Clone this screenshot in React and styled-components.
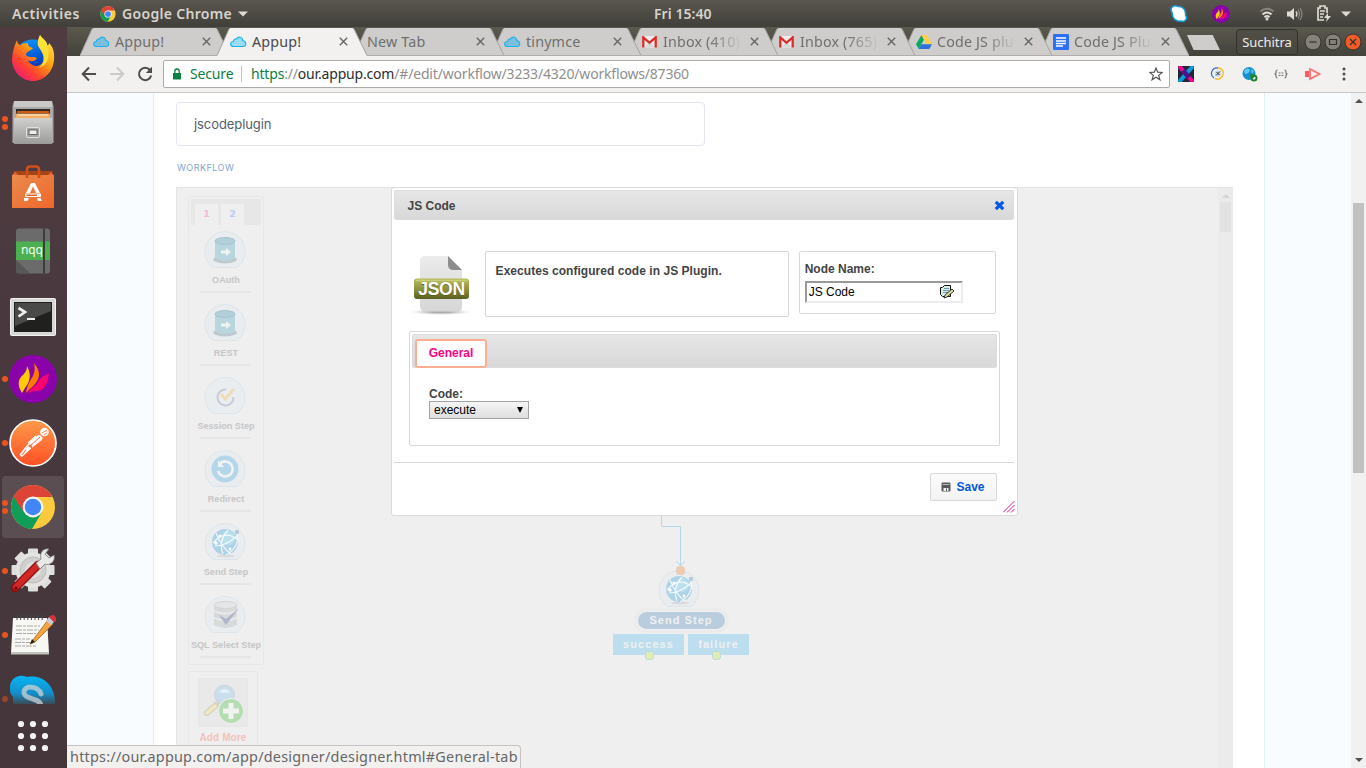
import React from "react";
import styled, { createGlobalStyle } from "styled-components";

const Global = createGlobalStyle`
  * { box-sizing: border-box; }
  body { margin: 0; overflow: hidden; background: #f8fcff; }
  svg { display: block; flex: none; }
`;

const ui = `"Noto Sans", "Open Sans", sans-serif`;
const arial = `"Liberation Sans", Arial, sans-serif`;

/* ---------- desktop shell ---------- */
const Desktop = styled.div`
  width: 1366px; height: 768px; display: flex; flex-direction: column; overflow: hidden; font-family: ${ui};
`;
const TopBar = styled.header`
  height: 27px; flex: none; display: flex; align-items: center; padding: 0 15px 0 12px;
  background: linear-gradient(#5a574f, #403f3a); color: #d8d4cb;
  font: 600 14px/27px ${ui};
`;
const BarText = styled.span`
  white-space: nowrap; width: ${(p) => p.$w}px; margin-right: ${(p) => p.$gap || 0}px; letter-spacing: ${(p) => p.$ls || 0}px;
`;
const Clock = styled(BarText)`margin-left: 406px;`;
const Tray = styled.div`margin-left: auto; display: flex; align-items: center; height: 27px;`;
const TrayGap = styled.span`width: ${(p) => p.$w}px;`;
const Columns = styled.div`flex: 1; display: flex; min-height: 0;`;

const Dock = styled.nav`
  width: 67px; flex: none; display: flex; flex-direction: column; background: linear-gradient(#4f3b40, #46383d 60%, #44363b);
`;
const Slot = styled.div`
  position: relative; height: ${(p) => p.$h || 64}px; flex: none; overflow: hidden; display: flex; align-items: flex-start; justify-content: center;
  & > svg { margin-right: 1px; }
`;
const ActivePlate = styled.span`
  position: absolute; left: 2px; top: 1px; width: 62px; height: 62px; border-radius: 4px; background: #5b4e52;
  & ~ * { z-index: 1; }
`;
const Dots = styled.span`
  position: absolute; left: 2px; top: ${(p) => (p.$n === 2 ? 25 : 29)}px; display: flex; flex-direction: column; gap: 2px; opacity: ${(p) => (p.$dim ? 0.5 : 1)};
  i { width: 6px; height: 6px; border-radius: 50%; background: #e95420; }
`;

/* ---------- browser window ---------- */
const Browser = styled.main`flex: 1; display: flex; flex-direction: column; min-width: 0; background: #f8fcff; position: relative;`;
const TabStrip = styled.div`
  height: 29px; flex: none; display: flex; padding-left: 13px; background: linear-gradient(#5b594e, #43423b);
`;
const TabBox = styled.div`
  position: relative; width: 150px; height: 29px; margin-right: -13px; z-index: ${(p) => p.$z}; flex: none;
`;
const TabShape = styled.svg`position: absolute; left: 0; top: 0;`;
const TabInner = styled.div`
  position: relative; height: 29px; display: flex; align-items: center; padding: 0 19px 0 13px;
`;
const Favicon = styled.span`width: 17px; margin-right: 5px; display: flex; justify-content: center;`;
const TabTitle = styled.span`
  flex: 1; white-space: nowrap; font: 14.3px/28px ${ui}; letter-spacing: 0.16px;
  color: ${(p) => (p.$active ? "#4a4a4a" : "#6f6f6f")}; margin-right: 9px;
  ${(p) => p.$fade && "mask-image: linear-gradient(90deg, #000 60%, transparent 102%);"}
`;
const NewTab = styled.span`
  width: 33px; height: 15px; margin: 8px 0 0 11px; background: #cecdcc; clip-path: polygon(0 0, 78% 0, 100% 100%, 20% 100%);
`;
const WindowControls = styled.div`margin-left: auto; display: flex; align-items: center; gap: 2px; padding: 1px 4px 0 0; height: 29px;`;
const UserButton = styled.button`
  height: 26px; width: 62px; padding: 0; margin-right: 4px; border: 1px solid #32312c; border-radius: 4px;
  background: linear-gradient(#504e46, #484740); color: #eeeeec; font: 13px/22px ${ui}; letter-spacing: -0.05px;
`;
const Toolbar = styled.div`
  height: 37px; flex: none; display: flex; align-items: center; background: #f2f1f0; border-bottom: 1px solid #c9c8c7; padding: 0 15px 0 14px;
`;
const NavIcon = styled.span`width: 28px; display: flex;`;
const Omnibox = styled.div`
  width: 1007px; height: 28px; margin-left: -2px; border: 1px solid #ababab; border-radius: 2px; background: #fff; display: flex; align-items: center;
  padding: 0 6px 0 8px; font: 14px/26px ${ui}; white-space: nowrap;
`;
const Secure = styled.span`color: #0b8043; margin-left: 8px; width: 51px; letter-spacing: -0.15px;`;
const UrlText = styled.span`
  border-left: 1px solid #c3c3c3; height: 16px; line-height: 15px; padding-left: 9px; color: #8f8f8f; flex: 1; letter-spacing: ${(p) => p.$ls}px;
  b { font-weight: 400; color: #0b8043; } em { font-style: normal; color: #2d2d2d; }
`;
const Extensions = styled.div`display: flex; align-items: center; gap: 16px; margin-left: 8px; & > :last-child { margin-left: 4px; }`;

/* ---------- page ---------- */
const Viewport = styled.div`flex: 1; min-height: 0; display: flex;`;
const Page = styled.section`
  flex: 1; min-width: 0; margin: 0 86px; background: #fff; border: solid #dfeefa; border-width: 0 1px; padding: 9px 31px 0 22px; overflow: hidden;
  display: flex; flex-direction: column;
`;
const NameField = styled.div`
  width: 529px; height: 44px; flex: none; border: 1px solid #e2e5f3; border-radius: 4px; padding-left: 17px;
  font: 13px/42px Inter, sans-serif; color: #54606c; letter-spacing: -0.08px;
`;
const Caption = styled.div`
  height: 41px; flex: none; font: 9px/43px Inter, sans-serif; color: #86a5cb; letter-spacing: 0.48px; padding-left: 1px;
`;
const Canvas = styled.div`
  position: relative; flex: 1; min-height: 0; background: #efefef; border: solid #e4e4e4; border-width: 1px 0 0 1px; display: flex; justify-content: space-between;
`;
const Scroll = styled.div`
  width: 15px; flex: none; background: ${(p) => (p.$pale ? "#ebebeb" : "#f1f1f1")}; display: flex; flex-direction: column; align-items: center;
`;
const Thumb = styled.span`
  width: 11px; height: ${(p) => p.$h}px; flex: none; margin-top: ${(p) => p.$top}px; background: ${(p) => (p.$pale ? "#e2e2e2" : "#c1c1c1")};
`;
const Arrow = styled.span`
  width: 0; height: 0; border: 4px solid transparent; ${(p) => (p.$down ? "border-top" : "border-bottom")}: 4px solid ${(p) => p.$c || "#505050"};
  margin: ${(p) => (p.$down ? "auto 0 2px" : "2px 0 0")};
`;
const Sidebar = styled.div`padding: 8px 0 0 11px; width: 90px; display: flex; flex-direction: column; align-items: flex-start; gap: 6px; overflow: hidden;`;
const Palette = styled.div`width: 76px; height: 469px; flex: none; border: 1px solid #e6e8e9; border-radius: 2px; padding: 2px;`;
const PaletteTabs = styled.div`height: 26px; background: #e7e7e7; border-radius: 2px; padding: 5px 0 0 4px; display: flex; gap: 3px;`;
const PaletteTab = styled.span`
  width: 23px; background: #efefef; text-align: center; font: bold 9.5px/19px "DejaVu Sans", sans-serif; color: ${(p) => p.$c};
`;
const PaletteItem = styled.div`
  height: 73px; display: flex; flex-direction: column; align-items: center; padding: 6px 0 0; font: bold 9.1px/11px ${arial}; color: #c6c6c6; white-space: nowrap;
  svg { margin-bottom: 6px; margin-right: 2px; }
  &::after { content: ""; width: 51px; height: 2px; flex: none; background: #e6e6e6; margin: 5px 1px 0 0; }
`;
const AddMore = styled.div`
  width: 70px; height: 110px; flex: none; border: 1px solid #e6e8e9; border-radius: 2px; padding-top: 6px; display: flex; flex-direction: column; align-items: center;
  font: bold 10px/14px ${arial}; color: #f3c2ba; letter-spacing: 0.1px;
`;
const AddPlate = styled.div`width: 50px; height: 49px; background: #e9e9e9; border: 1px solid #e6e6e6; border-radius: 2px; margin-bottom: 4px;`;

/* workflow graph: free canvas placement */
const Link = styled.svg`position: absolute; left: 480px; top: 326px;`;
const GraphNode = styled.div`
  position: absolute; left: 436px; top: 382px; width: 140px; display: flex; flex-direction: column; align-items: center;
  & > svg { margin: 0 9px 1px 0; }
`;
const NodeTitle = styled.div`
  width: 93px; height: 23px; margin-left: -4px; border: 2px solid #ebebeb; outline: 1px solid #ebebeb; border-radius: 12px; padding: 1px; background: #f1f1f1;
  span { display: block; height: 17px; border-radius: 9px; background: #b9cddf; color: #f0f0f0; text-align: center; font: bold 11px/16px ${arial}; letter-spacing: 1.05px; }
`;
const Ports = styled.div`display: flex; gap: 4px; margin: 2px 4px 0 0;`;
const Port = styled.div`
  position: relative; width: ${(p) => p.$w}px; height: 21px; background: #bcdeef; color: #f0f0f0; text-align: center; font: bold 11px/20px ${arial}; letter-spacing: ${(p) => p.$ls}px;
`;
const Knob = styled.i`
  position: absolute; width: 9px; height: 9px; border-radius: 3px; background: ${(p) => p.$c}; border: 1px solid ${(p) => p.$b}; left: ${(p) => p.$x}px; top: ${(p) => p.$y}px;
`;

/* ---------- dialog ---------- */
const Dialog = styled.div`
  position: absolute; left: 214px; top: -1px; width: 627px; height: 329px; background: #fff; border: 1px solid #dadada; border-radius: 3px; padding: 2px;
  display: flex; flex-direction: column; font: bold 12px/15px ${arial}; color: #444;
`;
const DialogHead = styled.div`
  height: 30px; width: 620px; flex: none; border-radius: 2px; background: linear-gradient(#e6e6e6, #d8d8d8); border: 1px solid #dcdcdc;
  display: flex; align-items: center; justify-content: space-between; padding: 2px 8px 0 12.5px;
  svg { margin-bottom: 1px; }
`;
const Intro = styled.div`display: flex; align-items: flex-start; padding: 31px 0 0 18px; height: 111px; flex: none;`;
const DescBox = styled.div`width: 304px; height: 66px; border: 1px solid #d8d8d8; border-radius: 2px; margin-left: 13px; padding: 12px 9.6px; letter-spacing: 0.04px;`;
const NameBox = styled.div`width: 197px; height: 63px; border: 1px solid #d8d8d8; border-radius: 2px; margin-left: 10px; padding: 10px 4.7px;`;
const InsetField = styled.div`
  width: 158px; height: 22px; margin-top: 4px; border: 2px solid; border-color: #999 #ececec #ececec #999; padding: 0 6px 0 2px;
  display: flex; align-items: center; justify-content: space-between; font-weight: 400; color: #000;
`;
const TabPanel = styled.div`width: 591px; height: 115px; flex: none; margin-left: 15px; border: 1px solid #d8d8d8; border-radius: 2px; padding: 2px;`;
const TabHead = styled.div`height: 34px; background: linear-gradient(#e6e6e6, #d8d8d8); border: 1px solid #dcdcdc; border-radius: 2px; padding: 4px 0 0 2px;`;
const GeneralTab = styled.div`
  width: 72px; height: 29px; border: 2px solid #fcae92; border-radius: 3px; background: #fff; color: #ff0084; text-align: center; line-height: 24px;
`;
const FormRow = styled.div`padding: 19px 0 0 17px; line-height: 14px;`;
const Select = styled.div`
  width: 100px; height: 18px; border: 1px solid #a3a3a3; background: linear-gradient(#f5f5f5, #dedede); display: flex; align-items: center; justify-content: space-between;
  padding: 0 5px 0 4px; font-weight: 400; color: #000; line-height: 16px;
  &::after { content: ""; border: 3.5px solid transparent; border-top: 6px solid #000; border-bottom: 0; }
`;
const DialogFoot = styled.div`margin-top: 16px; width: 620px; border-top: 1px solid #d8d8d8; display: flex; justify-content: flex-end; padding: 10px 17px 0 0;`;
const SaveButton = styled.button`
  width: 67px; height: 28px; border: 1px solid #d8d8d8; border-radius: 2px; background: linear-gradient(#fbfbfb, #f3f3f3); color: #0059e0; padding: 0 1px 0 0;
  display: flex; align-items: center; justify-content: center; gap: 5px; font: bold 12px/15px ${arial};
`;
const Grip = styled.svg`position: absolute; right: 2px; bottom: 2px;`;
const StatusBar = styled.div`
  position: absolute; left: 0; bottom: 0; width: 454px; height: 23px; background: #f2f1f0; border: solid #c4c3c2; border-width: 1px 1px 0 0; border-top-right-radius: 4px;
  padding-left: 3px; font: 14.4px/22px ${ui}; color: #666; white-space: nowrap; letter-spacing: ${(p) => p.$ls}px; z-index: 20;
`;

/* ---------- drawings ---------- */
const Chrome = ({ s = 46 }) => (
  <svg width={s} height={s} viewBox="0 0 46 46">
    <circle cx="23" cy="23" r="22" fill="#fbcb3d" />
    <path d="M23 23 4 12A22 22 0 0 0 22 45L32 28Z" fill="#109d57" />
    <path d="M3.5 12.5A22 22 0 0 1 42.5 13H23L13.5 28Z" fill="#dc4437" />
    <circle cx="23" cy="23" r="10.4" fill="#f4f4f4" />
    <circle cx="23" cy="23" r="8.2" fill="#4285f4" />
  </svg>
);
const Flame = ({ s }) => (
  <svg width={s} height={s} viewBox="0 0 48 48">
    <circle cx="24" cy="24" r="24" fill="#8a02aa" />
    <path d="M13 38C8 30 9 24 14 20C17 17 18 14 18 11C22 18 22 26 16 33Z" fill="#ffcb05" />
    <path d="M17 38C18 30 21 26 24 21C26 17 26 12 25 8C31 15 32 22 26 29C23 33 20 34 17 38Z" fill="#ff7b00" />
    <path d="M19 39C21 33 26 32 29 27C32 22 36 20 40 19C38 29 36 36 27 36C24 36 21 37 19 39Z" fill="#fb0371" />
  </svg>
);
const Caret = () => <svg width="10" height="6" viewBox="0 0 10 6"><path d="M0 .5H10L5 5.5Z" fill="#dfdbd2" /></svg>;

const Firefox = () => (
  <svg width="44" height="64" viewBox="0 0 44 64">
    <defs>
      <linearGradient id="ffA" x1="0.9" y1="0" x2="0.1" y2="1"><stop offset="0" stopColor="#fff14a" /><stop offset=".4" stopColor="#ffa30f" /><stop offset=".7" stopColor="#ff4130" /><stop offset="1" stopColor="#e5128a" /></linearGradient>
      <linearGradient id="ffB" x1="0.3" y1="0" x2="0.5" y2="1"><stop offset="0" stopColor="#0a93ff" /><stop offset=".6" stopColor="#0048c4" /><stop offset="1" stopColor="#3a1a78" /></linearGradient>
    </defs>
    <circle cx="22" cy="32" r="19.500" fill="url(#ffB)" />
    <path d="M6 13C6 16 8 18 10 18C12 15 15 17 17 16C17 19 18 20 22 21C20 24 15 24 15 28C17 31 22 29 26 31C24 35 20 35 17 33C19 39 28 42 32 35C34 29 30 23 27 19C26 14 28 11 29 8C31 12 36 13 36 18C38 19 38 16 38 16C41 19 44 24 43 33C42 45 33 54 22 54C11 54 2 45 1 34C1 26 3 19 6 13Z" fill="url(#ffA)" />
    <path d="M29 8C31 12 37 14 37 22C39 33 35 39 28 41C35 34 34 28 29 22C26 17 27 12 29 8Z" fill="#ffe53a" opacity=".85" />
  </svg>
);
const Files = () => (
  <svg width="44" height="64" viewBox="0 0 44 64">
    <defs><linearGradient id="fl" x1="0" y1="0" x2="0" y2="1"><stop offset="0" stopColor="#d0d0ce" /><stop offset="1" stopColor="#9b9b99" /></linearGradient></defs>
    <path d="M3 10H41L42.500 15V52H1.500V15Z" fill="#aaa" /><path d="M3 10H41V16H3Z" fill="#c9c9c7" />
    <path d="M5 18H39V28H5Z" fill="#302b28" /><path d="M6 20H38V22H6Z" fill="#cf5912" /><path d="M5 22.500H39V28H5Z" fill="#f5ad62" /><path d="M7 23.500H37V24.500H7Z" fill="#fff2dd" />
    <path d="M3 27H41V53H3Z" fill="url(#fl)" />
    <rect x="15.500" y="36.500" width="13" height="10" rx="1.500" fill="#a5a5a3" stroke="#e0e0de" /><rect x="18" y="39" width="8" height="4.500" fill="#eee" stroke="#4d4d4d" strokeWidth=".8" />
  </svg>
);
const Software = () => (
  <svg width="44" height="64" viewBox="0 0 44 64">
    <defs><linearGradient id="sw" x1="0" y1="0" x2="1" y2="1"><stop offset="0" stopColor="#e98a4c" /><stop offset="1" stopColor="#f0672c" /></linearGradient></defs>
    <path d="M3 16H41L43 21H1Z" fill="#a64416" /><path d="M1 21 4 17 8 21ZM43 21 40 17 36 21Z" fill="#e56a34" />
    <path d="M1 20H43V53H1Z" fill="url(#sw)" />
    <path d="M16 23V15Q16 11.500 19 11.500H25Q28 11.500 28 15V23" fill="none" stroke="#d24e1c" strokeWidth="2.600" />
    <path d="M15 38 20 28H24L29 38H25L22 31.500 19 38ZM14 38.500H30V42H14ZM13 43H18L16.500 46H13ZM26 43H29.500L31 46H27Z" fill="#fff" />
    <path d="M15.500 39.500H26V41H15.500Z" fill="#e76228" />
  </svg>
);
const NqqLabel = styled.span`position: absolute; left: 21px; top: 24px; font: 12px/14px ${ui}; color: #f0fff0; letter-spacing: -0.2px;`;
const Nqq = () => (
  <>
    <svg width="44" height="64" viewBox="0 0 44 64">
      <rect x="5" y="9.500" width="34" height="45" rx="3" fill="#6b6b6b" /><path d="M5 41 19 54.500H8Q5 54 5 52Z" fill="#575757" />
      <path d="M5 22.500H39V41H5Z" fill="#4caf50" /><path d="M32 9.500H34V54.500H32Z" fill="#3b3f3b" />
    </svg>
    <NqqLabel>nqq</NqqLabel>
  </>
);
const Terminal = () => (
  <svg width="46" height="64" viewBox="0 0 46 64">
    <rect x="0.500" y="15.500" width="45" height="37" rx="1" fill="#d7d7d5" stroke="#f1f1f1" /><rect x="4" y="19" width="38" height="30" fill="#20211f" />
    <path d="M5 20H41V28L5 43Z" fill="#4a4b49" /><path d="M8.500 25 15 29 8.500 33.500" fill="none" stroke="#eee" strokeWidth="2.700" /><path d="M17 36H25" stroke="#eee" strokeWidth="2" />
  </svg>
);
const Centered = styled.span`display: flex; align-items: center; height: 64px; margin-right: 1px;`;
const Postman = () => (
  <svg width="48" height="48" viewBox="0 0 48 48">
    <defs><linearGradient id="pm" x1="0" y1="0" x2="0" y2="1"><stop offset="0" stopColor="#ff9a4a" /><stop offset="1" stopColor="#ff4f25" /></linearGradient></defs>
    <circle cx="24" cy="24" r="23" fill="url(#pm)" stroke="#fff" strokeWidth="1.700" />
    <circle cx="35.500" cy="13" r="4.300" fill="#fff" /><path d="M33 14 38 11M35 16 38 14" stroke="#ff7d41" />
    <path d="M31 16 34 19 24 27 20 25ZM19 27 22 29 13 38 11 37Z" fill="#fff" /><path d="M30 16 18 27 11 36M33 20 23 28M27 17 19 24M22 29 17 33" fill="none" stroke="#fff" strokeWidth="1.300" />
    <path d="M31 18 20 28M17 31 13 36" stroke="#ff6838" strokeWidth="1" />
  </svg>
);
const Settings = () => (
  <svg width="46" height="64" viewBox="0 0 46 64">
    <g transform="translate(23 31)">
      {[0, 45, 90, 135].map((a) => <rect key={a} x="-5" y="-21.500" width="10" height="43" rx="1" fill="#dededc" transform={`rotate(${a})`} />)}
      <circle r="17.500" fill="#e3e3e1" /><circle r="13" fill="#cfcfcd" stroke="#bcbcba" /><circle r="8" fill="#dededc" />
    </g>
    <path d="M5 49 28 26" stroke="#8e1111" strokeWidth="8.500" strokeLinecap="round" /><path d="M6 48 28 26" stroke="#d32626" strokeWidth="6" strokeLinecap="round" />
    <circle cx="6" cy="49" r="1.600" fill="#611" />
    <path d="M26 24 31 20C29 13 34 9 39 10L35 15 39 19 44 16C46 23 39 27 35 25L30 30Z" fill="#e9e9e7" stroke="#777" strokeWidth=".8" />
  </svg>
);
const Notes = () => (
  <svg width="46" height="64" viewBox="0 0 46 64">
    <path d="M3 15H37L39 50H1Z" fill="#f7f7f4" /><path d="M1 49H39V51.500H1Z" fill="#c2c2bd" />
    {[0, 1, 2, 3, 4, 5, 6, 7].map((i) => <path key={i} d={`M${7 + i * 3.6} 17V12.500Q${8.4 + i * 3.6} 10 ${9 + i * 3.6} 14`} stroke="#444" fill="none" />)}
    <path d="M6 23H30M6 27H29M6 30.500H26M5 36H20M5 39.500H20M5 43H27" stroke="#aaa" strokeDasharray="6 1 3 1" />
    <path d="M20 41 38 17 43 21 25 39Z" fill="#f5a542" stroke="#a45c12" strokeWidth=".8" /><path d="M20 41 22 36 25 39Z" fill="#222" />
    <path d="M36 18 39 14 44 19 41 22Z" fill="#c9cbd3" /><path d="M39 14Q43 10 45.500 14T44 19Z" fill="#d7343a" />
  </svg>
);
const Skype = () => (
  <svg width="46" height="64" viewBox="0 0 46 64">
    <defs><linearGradient id="sk" x1="0" y1="9" x2="0" y2="38" gradientUnits="userSpaceOnUse"><stop offset="0" stopColor="#07b5f3" /><stop offset=".6" stopColor="#148ec8" /><stop offset="1" stopColor="#3f434b" /></linearGradient></defs>
    <path d="M0 20C0 12 8 6 17 10C32 7 45 18 45 35V40H3V30C0 27 0 24 0 20Z" fill="url(#sk)" />
    <path d="M31 27C28 18 13 18 14 26C15 33 29 30 31 38" fill="none" stroke="#cbd1d5" strokeWidth="5" strokeLinecap="round" opacity=".75" />
  </svg>
);
const AppGrid = () => (
  <svg width="46" height="64" viewBox="0 0 46 64">
    {[11, 23, 35].map((x) => [20, 32, 44].map((y) => <circle key={`${x}${y}`} cx={x} cy={y} r="3.1" fill="#f4f2f2" />))}
  </svg>
);
const Cloud = ({ dim }) => (
  <svg width="17" height="12" viewBox="0 0 17 12"><path d="M4 10.500C-.5 10.500-.2 5.800 3.300 5.500C3.600 2.800 5.800 2.800 6.500 3C8 .2 12.500.5 12.800 4.500C16.500 5 17 10.500 13 10.500Z" fill={dim ? "#7cbedd" : "#9bdcf8"} stroke="#1fb1ec" strokeWidth="1.100" /></svg>
);
const Gmail = () => (
  <svg width="15" height="12" viewBox="0 0 15 12"><path d="M1 0H14V11.500H1Z" fill="#ececec" /><path d="M3 11 7.500 6 12 11Z" fill="#d6d6d6" /><path d="M1.300 11.500V1.300L7.500 6.800 13.700 1.300V11.500" fill="none" stroke="#dd2c2c" strokeWidth="2.300" /></svg>
);
const Drive = () => (
  <svg width="16" height="14" viewBox="0 0 16 14"><path d="M5.400 0 0 9.300 2.700 14 8 4.600Z" fill="#0da960" /><path d="M5.400 0H10.600L16 9.300H10.700Z" fill="#ffcf43" /><path d="M5.400 9.300H16L13.300 14H2.700Z" fill="#2c6fdd" /></svg>
);
const Docs = () => (
  <svg width="16" height="16" viewBox="0 0 16 16"><rect width="16" height="16" rx="1" fill="#2f6ff5" /><path d="M3 4H13M3 7H13M3 9.500H13M3 12H10" stroke="#fff" strokeWidth="1.500" /></svg>
);
const CloseX = () => <svg width="9" height="9" viewBox="0 0 9 9"><path d="M.8.8 8.200 8.200M8.200.8.8 8.200" stroke="#666" strokeWidth="1.400" /></svg>;

const Plate = ({ children }) => (
  <svg width="42" height="38" viewBox="0 0 42 38"><path d="M9 36.500A20 20 0 1 1 33 36.500Z" fill="#eaedef" stroke="#dde5ea" />{children}</svg>
);
const Barrel = () => (
  <Plate><path d="M9.500 27Q21 24 32.500 27V30Q21 35 9.500 30Z" fill="#bfcace" /><path d="M11 9V27Q21 33 31 27V9Z" fill="#b9d6df" /><ellipse cx="21" cy="10" rx="10" ry="3.500" fill="#b2d0da" stroke="#a9c5cf" /><path d="M17 19.500H22V17L27 21 22 25V22.500H17Z" fill="#eef3f4" /></Plate>
);
const Check = () => (
  <Plate><path d="M22 12.500A8 8 0 1 0 29.500 20" fill="none" stroke="#c8cad8" strokeWidth="2" /><path d="M17 17 21 22 30 12" fill="none" stroke="#efdcb4" strokeWidth="2.800" /></Plate>
);
const Redo = () => (
  <Plate><circle cx="21" cy="19" r="13.500" fill="#b5d6e8" /><path d="M16 13.500A7.500 7.500 0 1 1 14 21" fill="none" stroke="#eff3f5" strokeWidth="2.600" /><path d="M14 10V17H20Z" fill="#eff3f5" /></Plate>
);
const Globe = () => (
  <Plate>
    <ellipse cx="22" cy="33" rx="9" ry="1.500" fill="#d9dadb" /><circle cx="21" cy="19" r="13" fill="#aed2e7" /><circle cx="24" cy="15" r="7" fill="#b9e0ed" />
    <path d="M9 20Q21 6 34 17M12 10Q18 25 27 31M11 23Q22 23 33 13M24 7Q14 18 19 31M33 10Q36 24 22 32" fill="none" stroke="#f3f8fa" strokeWidth="1.200" />
    <circle cx="33" cy="9" r="2.200" fill="#b3cadd" /><circle cx="12" cy="20" r="1.700" fill="#fff" /><circle cx="16" cy="13" r="1.500" fill="#fff" /><circle cx="26" cy="26" r="1.400" fill="#fff" />
  </Plate>
);
const Database = () => (
  <Plate><path d="M10 9V29Q21 35 33 29V9Z" fill="#d8d9da" /><path d="M10 15Q21 20 33 15M10 22Q21 27 33 22" fill="none" stroke="#ececec" strokeWidth="1.500" /><ellipse cx="21.500" cy="9" rx="11.500" ry="3.500" fill="#e6e6e6" stroke="#d3d4d5" /><path d="M15 19 22 29 35 12 22 23Z" fill="#adb5ca" /></Plate>
);
const Magnifier = () => (
  <svg width="48" height="47" viewBox="0 0 48 47"><path d="M8 34 17 26" stroke="#d5d2c2" strokeWidth="6" strokeLinecap="round" /><path d="M8 34 16 27" stroke="#f0e8c1" strokeWidth="3.500" strokeLinecap="round" /><circle cx="25.500" cy="16" r="9.500" fill="#c9dfee" stroke="#d1d9df" strokeWidth="2" /><path d="M20 13Q25 7 31 13Q25 15 20 13Z" fill="#e6f1f7" /><circle cx="32" cy="32" r="12.500" fill="#b5dcb3" stroke="#eef2ed" /><path d="M29.500 24H34.500V29.500H40V34.500H34.500V40H29.500V34.500H24V29.500H29.500Z" fill="#f1f3f1" /></svg>
);

const JsonWrap = styled.div`position: relative; width: 60px; height: 66px;`;
const JsonWord = styled.span`
  position: absolute; left: 0; top: 27px; width: 59px; text-align: center; color: #fff; font: bold 17.5px/22px ${arial}; letter-spacing: -0.3px; text-shadow: 0 1px 1px #5c5f1c;
`;
const JsonIcon = () => (
  <JsonWrap>
    <svg width="60" height="66" viewBox="0 0 60 66">
      <defs>
        <linearGradient id="pg" x1="0" y1="0" x2="0" y2="1"><stop offset="0" stopColor="#ebebeb" /><stop offset="1" stopColor="#d6d6d6" /></linearGradient>
        <linearGradient id="bd" x1="0" y1="0" x2="0" y2="1"><stop offset="0" stopColor="#b9bf5c" /><stop offset=".5" stopColor="#8e9440" /><stop offset="1" stopColor="#5c5f22" /></linearGradient>
        <radialGradient id="sh"><stop offset=".3" stopColor="#888" stopOpacity=".7" /><stop offset="1" stopColor="#bbb" stopOpacity="0" /></radialGradient>
      </defs>
      <ellipse cx="29" cy="61" rx="30" ry="3" fill="url(#sh)" />
      <path d="M8 10Q8 5 13 5H36L50 19V56Q50 60.500 45 60.500H13Q8 60 8 55Z" fill="url(#pg)" /><path d="M36 5 50 19H40Q36 18 36 14Z" fill="#8d8d8d" />
      <rect x="2" y="27.500" width="55" height="20.500" rx="3" fill="url(#bd)" /><path d="M4 29.500H55" stroke="#c9ce7a" strokeWidth="1.500" />
    </svg>
    <JsonWord>JSON</JsonWord>
  </JsonWrap>
);

const tabs = [
  { icon: <Cloud dim />, title: "Appup!" },
  { icon: <Cloud />, title: "Appup!", active: true },
  { title: "New Tab" },
  { icon: <Cloud dim />, title: "tinymce" },
  { icon: <Gmail />, title: "Inbox (410)", fade: true },
  { icon: <Gmail />, title: "Inbox (765)", fade: true },
  { icon: <Drive />, title: "Code JS plu", fade: true },
  { icon: <Docs />, title: "Code JS Plu", fade: true },
];
const steps = [["OAuth", Barrel], ["REST", Barrel], ["Session Step", Check], ["Redirect", Redo], ["Send Step", Globe], ["SQL Select Step", Database]];

function Tab({ icon, title, active, fade, z }) {
  return (
    <TabBox $z={z}>
      <TabShape width="150" height="29" viewBox="0 0 150 29">
        <path d="M0 29 12 2Q12.500 1 14 1H135Q136.500 1 137 2L150 29Z" fill={active ? "#f2f1f0" : "#cecdcc"} />
        <path d="M0 28.500 12 2M137 2 150 28.500" stroke="#a5a4a1" fill="none" />
        {!active && <path d="M0 28.500H150" stroke="#b0afad" />}
      </TabShape>
      <TabInner>
        {icon && <Favicon>{icon}</Favicon>}
        <TabTitle $active={active} $fade={fade}>{title}</TabTitle>
        <CloseX />
      </TabInner>
    </TabBox>
  );
}

export default function App() {
  return (
    <Desktop>
      <Global />
      <TopBar>
        <BarText $w={68} $gap={20} $ls={0.55}>Activities</BarText>
        <Chrome s={16} />
        <TrayGap $w={6} />
        <BarText $w={110} $gap={6} $ls={0.32}>Google Chrome</BarText>
        <Caret />
        <Clock $w={60} $ls={0.05}>Fri 15:40</Clock>
        <Tray>
          <svg width="18" height="18" viewBox="0 0 18 18"><path d="M1 5C1 1 5 0 8 1.500C13 1 16 5 15.500 10C18 14 15 17.500 11 16C6 17 2 13 2.500 9Z" fill="#fff" stroke="#149bd0" strokeWidth="1.500" /></svg>
          <TrayGap $w={24} /><Flame s={18} /><TrayGap $w={29} />
          <svg width="16" height="14" viewBox="0 0 16 14" fill="none" strokeWidth="2"><path d="M1.500 4.500Q8-1 14.500 4.500" stroke="#85837c" /><path d="M3.500 7.500Q8 3.500 12.500 7.500M5.500 10.200Q8 8 10.500 10.200" stroke="#dfdbd2" /><circle cx="8" cy="12" r="1.500" fill="#dfdbd2" /></svg>
          <TrayGap $w={11} />
          <svg width="17" height="14" viewBox="0 0 17 14" fill="none"><path d="M1 4.500H4L8 1V13L4 9.500H1Z" fill="#dfdbd2" /><path d="M10 4.500Q12 7 10 9.500" stroke="#dfdbd2" strokeWidth="1.300" /><path d="M12 2.500Q15 7 12 11.500M14 1Q18 7 14 13" stroke="#8d8a83" strokeWidth="1.200" /></svg>
          <TrayGap $w={13} />
          <svg width="15" height="17" viewBox="0 0 15 17" fill="none"><path d="M8 15H2V3H4V1H9V3H11V8M4 6H9M4 9H8M4 12H7" stroke="#dfdbd2" strokeWidth="1.700" /><path d="M12 8 8 13H11L10 17 15 11H12Z" fill="#dfdbd2" /></svg>
          <TrayGap $w={10} /><Caret />
        </Tray>
      </TopBar>
      <Columns>
        <Dock>
          <Slot><Firefox /></Slot>
          <Slot><Dots $n={2}><i /><i /></Dots><Files /></Slot>
          <Slot><Software /></Slot>
          <Slot><Nqq /></Slot>
          <Slot><Terminal /></Slot>
          <Slot><Dots><i /></Dots><Centered><Flame s={48} /></Centered></Slot>
          <Slot><Dots><i /></Dots><Centered><Postman /></Centered></Slot>
          <Slot><ActivePlate /><Dots $n={2}><i /><i /></Dots><Centered><Chrome s={46} /></Centered></Slot>
          <Slot><Dots><i /></Dots><Settings /></Slot>
          <Slot><Dots><i /></Dots><Notes /></Slot>
          <Slot $h={37}><Dots $dim><i /></Dots><Skype /></Slot>
          <Slot><AppGrid /></Slot>
        </Dock>
        <Browser>
          <TabStrip>
            {tabs.map((t, i) => <Tab key={i} {...t} z={t.active ? 10 : 9 - i} />)}
            <NewTab />
            <WindowControls>
              <UserButton>Suchitra</UserButton>
              {["M5.500 9H12.500", "M5.500 6.500H12.500V11.500H5.500Z", "M6 6 12 12M12 6 6 12"].map((d, i) => (
                <svg key={i} width="18" height="18" viewBox="0 0 18 18"><circle cx="9" cy="9" r="8" fill={i === 2 ? "#f25a26" : "#83817a"} stroke="#35342f" /><path d={d} fill="none" stroke="#35302b" strokeWidth="1.200" /></svg>
              ))}
            </WindowControls>
          </TabStrip>
          <Toolbar>
            <NavIcon><svg width="16" height="16" viewBox="0 0 16 16"><path d="M15 8H2M8 1.500 1.700 8 8 14.500" fill="none" stroke="#4d4d4d" strokeWidth="2" /></svg></NavIcon>
            <NavIcon><svg width="16" height="16" viewBox="0 0 16 16"><path d="M1 8H14M8 1.500 14.300 8 8 14.500" fill="none" stroke="#cccbca" strokeWidth="2" /></svg></NavIcon>
            <NavIcon><svg width="16" height="16" viewBox="0 0 16 16"><path d="M13 4A6.200 6.200 0 1 0 14.200 9.500" fill="none" stroke="#4d4d4d" strokeWidth="2" /><path d="M15 .8V7H8.800Z" fill="#4d4d4d" /></svg></NavIcon>
            <Omnibox>
              <svg width="10" height="12" viewBox="0 0 10 12"><path d="M1 5H9V11.500H1Z" fill="#0b8043" /><path d="M2.800 5V3.200A2.200 2.200 0 0 1 7.200 3.200V5" fill="none" stroke="#0b8043" strokeWidth="1.300" /></svg>
              <Secure>Secure</Secure>
              <UrlText $ls={-0.18}><b>https</b>://<em>our.appup.com</em>/#/edit/workflow/3233/4320/workflows/87360</UrlText>
              <svg width="14" height="14" viewBox="0 0 14 14"><path d="M7 1 8.700 5.200 13.200 5.500 9.700 8.400 10.900 12.800 7 10.300 3.100 12.800 4.300 8.400.8 5.500 5.300 5.200Z" fill="none" stroke="#555" strokeWidth="1.200" /></svg>
            </Omnibox>
            <Extensions>
              <svg width="16" height="16" viewBox="0 0 16 16"><path d="M0 0H16V16H0Z" fill="#202637" /><path d="M15 0 1 16" stroke="#109bd8" strokeWidth="4" /><path d="M1 0 15 16" stroke="#ee0890" strokeWidth="4" /><path d="M5 4.500 11 11.500" stroke="#46168a" strokeWidth="4.500" /></svg>
              <svg width="16" height="16" viewBox="0 0 16 16" fill="none"><path d="M13 8A5.500 5.500 0 0 1 5 12.500" stroke="#f3bd2d" strokeWidth="1.500" /><path d="M8 2A5.500 5.500 0 0 0 4 12" stroke="#3a6bd0" strokeWidth="1.300" /><path d="M8 2A5.500 5.500 0 0 1 13.500 8" stroke="#f3bd2d" strokeWidth="1.500" /><circle cx="8" cy="7.500" r="3.300" fill="#c8dbe1" /><path d="M6 9.500 10 5.500M6.500 6 9.500 9" stroke="#333" /></svg>
              <svg width="16" height="16" viewBox="0 0 16 16"><circle cx="7" cy="7.500" r="6.500" fill="#1590d0" /><path d="M2 5Q5 0 8 4Q7 8 3 8ZM9 3 12 5 10 8Z" fill="#64c7ef" /><circle cx="12" cy="12" r="2.500" fill="none" stroke="#238325" strokeWidth="2" /><path d="M8 8 13 9 9 13Z" fill="#238325" /></svg>
              <svg width="14" height="10" viewBox="0 0 14 10" fill="none" stroke="#777"><path d="M3.500 1Q2 1 2 2.500V4L1 5 2 6V7.500Q2 9 3.500 9M10.500 1Q12 1 12 2.500V4L13 5 12 6V7.500Q12 9 10.500 9M4.500 4H6.500M7.500 4H9.500M4.500 6.500H6.500M7.500 6.500H9.500" strokeWidth="1.200" /></svg>
              <svg width="18" height="14" viewBox="0 0 18 14"><path d="M1 4H5V10H1Z" fill="#ff5a5f" /><path d="M6 2 15.500 7 6 12Z" fill="none" stroke="#ff7075" strokeWidth="1.800" /></svg>
              <svg width="4" height="14" viewBox="0 0 4 14" fill="#4d4d4d"><circle cx="2" cy="2" r="1.500" /><circle cx="2" cy="7" r="1.500" /><circle cx="2" cy="12" r="1.500" /></svg>
            </Extensions>
          </Toolbar>
          <Viewport>
            <Page>
              <NameField>jscodeplugin</NameField>
              <Caption>WORKFLOW</Caption>
              <Canvas>
                <Sidebar>
                  <Palette>
                    <PaletteTabs><PaletteTab $c="#f2bcd8">1</PaletteTab><PaletteTab $c="#bccdee">2</PaletteTab></PaletteTabs>
                    {steps.map(([name, Icon]) => <PaletteItem key={name}><Icon />{name}</PaletteItem>)}
                  </Palette>
                  <AddMore><AddPlate><Magnifier /></AddPlate>Add More</AddMore>
                </Sidebar>
                <Scroll $pale><Arrow $c="#d6d6d6" /><Thumb $pale $h={30} $top={4} /></Scroll>
                <Link width="40" height="60" viewBox="0 0 40 60"><path d="M4.500 0V12.500H23.500V51M19 47 23.500 51.500 28 47" fill="none" stroke="#b5d6e7" /></Link>
                <GraphNode>
                  <Globe />
                  <NodeTitle><span>Send Step</span></NodeTitle>
                  <Ports>
                    <Port $w={71} $ls={1.1}>success<Knob $c="#dfecb8" $b="#bfdbd5" $x={32} $y={17} /></Port>
                    <Port $w={61} $ls={1.1}>failure<Knob $c="#dfecb8" $b="#bfdbd5" $x={24} $y={17} /></Port>
                  </Ports>
                  <Knob $c="#edccb2" $b="#e8cfbe" $x={63} $y={-4} />
                </GraphNode>
                <Dialog>
                  <DialogHead>JS Code
                    <svg width="11" height="11" viewBox="0 0 11 11"><path d="M1.800 1.800 9.200 9.200M9.200 1.800 1.800 9.200" stroke="#0059e8" strokeWidth="3.200" /></svg>
                  </DialogHead>
                  <Intro>
                    <JsonIcon />
                    <DescBox>Executes configured code in JS Plugin.</DescBox>
                    <NameBox>Node Name:
                      <InsetField>JS Code
                        <svg width="16" height="16" viewBox="0 0 16 16"><path d="M5.500 1.500H11.500V12.500H3.500L1.500 10.500V3.500H3.500Z" fill="#d8ecec" stroke="#111" /><path d="M5 4.500H10M4 6.500H10M4 8.500H9" stroke="#6b9aa5" /><path d="M5 14 6 11 13 5 15 7 8 13Z" fill="#dbd9a0" stroke="#222" strokeWidth=".9" /></svg>
                      </InsetField>
                    </NameBox>
                  </Intro>
                  <TabPanel>
                    <TabHead><GeneralTab>General</GeneralTab></TabHead>
                    <FormRow>Code:<Select>execute</Select></FormRow>
                  </TabPanel>
                  <DialogFoot>
                    <SaveButton><svg width="10" height="10" viewBox="0 0 10 10"><rect x=".5" y=".5" width="9" height="9" rx="1.200" fill="#595959" /><path d="M1.500 2.500H8.500" stroke="#b9b9b9" /><path d="M2.500 6H7.500V9H2.500Z" fill="#eee" /><path d="M5 6.500H6V9H5Z" fill="#595959" /></svg>Save</SaveButton>
                  </DialogFoot>
                  <Grip width="12" height="12" viewBox="0 0 12 12"><path d="M0 11.500 11.500 0M4 11.500 11.500 4M8 11.500 11.500 8" stroke="#e6148c" fill="none" /></Grip>
                </Dialog>
              </Canvas>
            </Page>
            <Scroll><Arrow /><Thumb $h={270} $top={100} /><Arrow $down /></Scroll>
          </Viewport>
          <StatusBar $ls={0.235}>https://our.appup.com/app/designer/designer.html#General-tab</StatusBar>
        </Browser>
      </Columns>
    </Desktop>
  );
}
